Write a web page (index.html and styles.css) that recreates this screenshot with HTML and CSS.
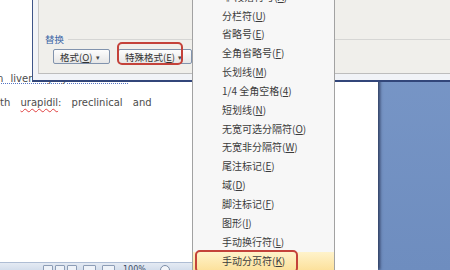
FILE: index.html
```html
<!DOCTYPE html>
<html lang="zh-CN">
<head>
    <meta charset="UTF-8">
    <title>查找和替换 - 特殊格式</title>
    <link rel="stylesheet" href="styles.css">
</head>
<body>
    <div class="screen">
        <div class="workspace">
            <div class="page">
                <p class="line first"><span class="gram">n liver injury associated</span> with</p>
                <p class="line"><span>th</span> <span class="spell">urapidil</span>: preclinical and</p>
                <div class="statusbar">
                    <span class="sb-btn"></span>
                    <span class="sb-btn"></span>
                    <span class="sb-btn"></span>
                    <span class="sb-btn wide"></span>
                    <span class="sb-btn wide"></span>
                    <span class="zoom">100%</span>
                    <span class="zoom-out"></span>
                </div>
            </div>
            <div class="backdrop"></div>
        </div>

        <div class="dialog">
            <div class="panel">
                <div class="group-title">
                    <span>替换</span>
                    <i class="rule"></i>
                </div>
                <div class="btn-row">
                    <button class="btn first">格式(<u>O</u>) <span class="arrow">▾</span></button>
                    <span class="marked">
                        <button class="btn second">特殊格式(<u>E</u>) <span class="arrow">▾</span></button>
                    </span>
                </div>
            </div>
        </div>

        <ul class="menu">
            <li>¶ 段落符号(<u>A</u>)</li>
            <li>分栏符(<u>U</u>)</li>
            <li>省略号(<u>E</u>)</li>
            <li>全角省略号(<u>F</u>)</li>
            <li>长划线(<u>M</u>)</li>
            <li>1/4 全角空格(<u>4</u>)</li>
            <li>短划线(<u>N</u>)</li>
            <li>无宽可选分隔符(<u>O</u>)</li>
            <li>无宽非分隔符(<u>W</u>)</li>
            <li>尾注标记(<u>E</u>)</li>
            <li>域(<u>D</u>)</li>
            <li>脚注标记(<u>F</u>)</li>
            <li>图形(<u>I</u>)</li>
            <li>手动换行符(<u>L</u>)</li>
            <li class="hot">手动分页符(<u>K</u>)</li>
        </ul>
    </div>
</body>
</html>
```

FILE: styles.css
```css
body {
    margin: 0;
    font-family: "DejaVu Sans", sans-serif;
}
.screen {
    position: relative;
    width: 450px;
    height: 270px;
    overflow: hidden;
    background: #ffffff;
}
.workspace {
    display: flex;
    height: 270px;
}
.page {
    position: relative;
    z-index: 1;
    width: 378px;
    height: 270px;
    background: #ffffff;
    display: flex;
    flex-direction: column;
    padding-top: 67px;
    box-sizing: border-box;
    box-shadow: 2px 0 3px rgba(25, 35, 65, 0.75);
}
.backdrop {
    flex: 1;
    background: linear-gradient(#7a98c8, #6e8dbf);
}
.line {
    margin: 0;
    font-size: 10px;
    line-height: 24px;
    color: #4c4c4c;
    word-spacing: 7px;
    white-space: nowrap;
}
.line.first {
    margin-left: -3px;
    word-spacing: 4px;
}
.gram {
    text-decoration: underline dotted #5574c4;
    text-underline-offset: 1px;
}
.spell {
    text-decoration: underline wavy #e04040;
    text-decoration-thickness: 1px;
    text-underline-offset: 2px;
}
.statusbar {
    margin-top: auto;
    width: 335px;
    height: 8px;
    overflow: hidden;
    display: flex;
    align-items: flex-start;
    gap: 2px;
    padding: 2px 0 0 43px;
    box-sizing: border-box;
    background: linear-gradient(#e4eaf3, #d4deec);
    border-top: 1px solid #aebdd4;
}
.sb-btn {
    width: 8px;
    height: 10px;
    border: 1px solid #8d9db6;
    border-radius: 1px;
    background: #eef2f8;
}
.sb-btn.wide {
    width: 11px;
    margin-left: 4px;
}
.zoom {
    margin-left: 6px;
    font-size: 8px;
    line-height: 9px;
    color: #3c4c66;
}
.zoom-out {
    width: 8px;
    height: 8px;
    margin-left: 12px;
    border: 1px solid #7d8ea8;
    border-radius: 50%;
    background: #f4f6fa;
}

/* dialog */
.dialog {
    position: absolute;
    left: 32px;
    top: 0;
    right: 0;
    height: 82px;
    z-index: 2;
    box-sizing: border-box;
    padding: 0 0 6px 5px;
    background: #f1f3f7;
    border-left: 1px solid #3d5488;
    border-bottom: 2px solid #32467a;
}
.panel {
    height: 100%;
    box-sizing: border-box;
    padding-top: 32px;
    background: #f0efeb;
    border-left: 1px solid #c8c8c8;
    border-bottom: 1px solid #bdbdbd;
}
.group-title {
    display: flex;
    align-items: center;
    height: 14px;
    padding-left: 6px;
    font-family: "Noto Sans CJK SC", sans-serif;
    font-size: 9.5px;
    color: #3a66a6;
}
.rule {
    flex: 1;
    height: 1px;
    margin-left: 4px;
    background: #d6d6d4;
}
.btn-row {
    display: flex;
    gap: 8px;
    margin-top: 3px;
    padding-left: 14px;
}
.btn {
    height: 15px;
    padding: 0 0 0 6px;
    box-sizing: border-box;
    display: flex;
    align-items: center;
    font-family: "Noto Sans CJK SC", sans-serif;
    font-size: 9.5px;
    line-height: 12px;
    color: #333333;
    background: linear-gradient(#fdfdfd, #e6e6e6);
    border: 1px solid #8193ad;
    border-radius: 2px;
}
.btn.first {
    width: 57px;
}
.btn.second {
    width: 74px;
}
.arrow {
    margin-left: 3px;
    font-size: 7px;
    color: #444444;
}
.marked {
    position: relative;
    display: flex;
}
.marked::after {
    content: "";
    position: absolute;
    left: -1px;
    top: -7px;
    width: 66px;
    height: 23px;
    box-sizing: border-box;
    border: 2px solid #c4423a;
    border-radius: 5px;
}

/* drop-down menu */
.menu {
    position: absolute;
    left: 192px;
    top: -12.3px;
    z-index: 3;
    width: 143px;
    margin: 0;
    padding: 0;
    list-style: none;
    box-sizing: border-box;
    background: #f7f7f7;
    border-left: 1px solid #a2a2a2;
    border-right: 1px solid #a2a2a2;
}
.menu li {
    position: relative;
    height: 18.85px;
    line-height: 18.85px;
    padding-left: 29px;
    font-family: "Noto Sans CJK SC", sans-serif;
    font-size: 10px;
    color: #3c3c3c;
    white-space: nowrap;
}
.menu li.hot {
    background: linear-gradient(#fff3cb, #fce19c);
}
.menu li.hot::after {
    content: "";
    position: absolute;
    left: 2px;
    top: -2px;
    width: 103px;
    height: 23px;
    box-sizing: border-box;
    border: 2px solid #c4423a;
    border-radius: 5px;
}
```
